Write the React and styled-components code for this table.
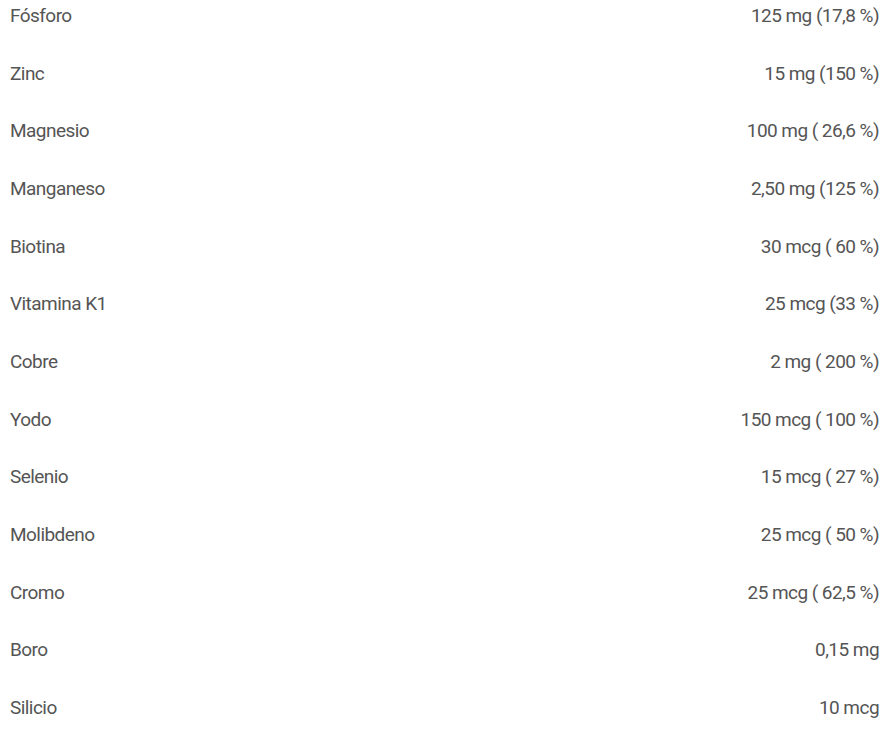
import React from "react";
import styled, { createGlobalStyle } from "styled-components";

const GlobalStyle = createGlobalStyle`
  html, body {
    margin: 0;
    padding: 0;
    background: #ffffff;
  }
  body {
    font-family: Roboto, "Liberation Sans", sans-serif;
    overflow: hidden;
  }
`;

const rows = [
  ["Fósforo", "125 mg (17,8 %)"],
  ["Zinc", "15 mg (150 %)"],
  ["Magnesio", "100 mg ( 26,6 %)"],
  ["Manganeso", "2,50 mg (125 %)"],
  ["Biotina", "30 mcg ( 60 %)"],
  ["Vitamina K1", "25 mcg (33 %)"],
  ["Cobre", "2 mg ( 200 %)"],
  ["Yodo", "150 mcg ( 100 %)"],
  ["Selenio", "15 mcg ( 27 %)"],
  ["Molibdeno", "25 mcg ( 50 %)"],
  ["Cromo", "25 mcg ( 62,5 %)"],
  ["Boro", "0,15 mg"],
  ["Silicio", "10 mcg"],
];

export default function App() {
  return (
    <>
      <GlobalStyle />
      <Table>
        {rows.map(([name, amount]) => (
          <Row key={name}>
            <Name>{name}</Name>
            <Amount>{amount}</Amount>
          </Row>
        ))}
      </Table>
    </>
  );
}

const Table = styled.div`
  display: flex;
  flex-direction: column;
  margin-top: -12.5px;
  padding: 0 17px 0 10px;
`;

const Row = styled.div`
  display: flex;
  justify-content: space-between;
  align-items: center;
  padding: 14.4px 0;
  line-height: 28.9px;
  font-size: 19px;
  color: #555555;
  letter-spacing: -0.55px;
`;

const Name = styled.span`
  white-space: nowrap;
`;

const Amount = styled.span`
  white-space: pre;
  text-align: right;
`;
